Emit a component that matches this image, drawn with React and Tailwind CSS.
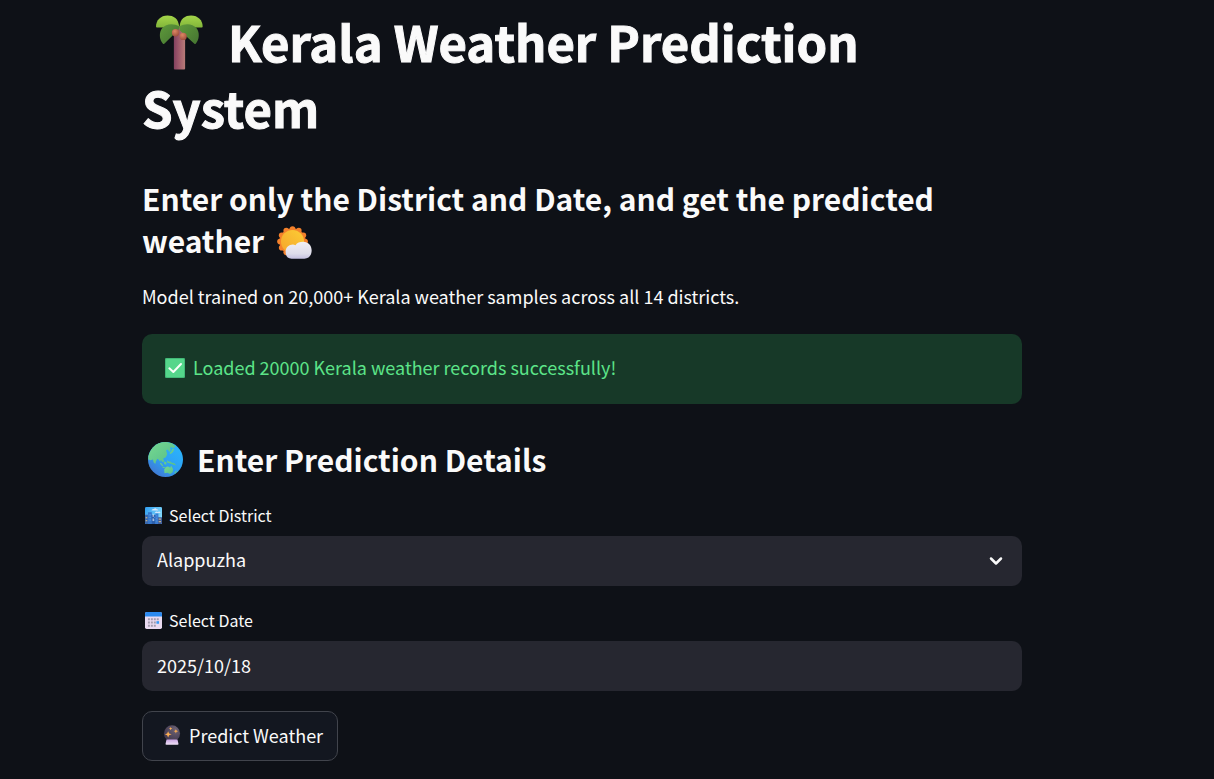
import { useState } from "react";
import { ChevronDown } from "lucide-react";

const DISTRICTS = [
  "Alappuzha", "Ernakulam", "Idukki", "Kannur", "Kasaragod", "Kollam", "Kottayam",
  "Kozhikode", "Malappuram", "Palakkad", "Pathanamthitta", "Thiruvananthapuram", "Thrissur", "Wayanad",
];

function PalmIcon({ className }) {
  return (
    <svg viewBox="48 46 142 165" className={className} aria-hidden="true">
      <defs>
        <linearGradient id="trunk" x1="0" x2="1" y1="0" y2="0">
          <stop offset="0" stopColor="#83415f" />
          <stop offset="0.45" stopColor="#a05a6c" />
          <stop offset="1" stopColor="#b77c78" />
        </linearGradient>
        <linearGradient id="leafTop" x1="0" x2="0" y1="0" y2="1">
          <stop offset="0" stopColor="#a4d54a" />
          <stop offset="1" stopColor="#82b63a" />
        </linearGradient>
        <linearGradient id="leafLow" x1="0" x2="1" y1="0" y2="1">
          <stop offset="0" stopColor="#5f9a3b" />
          <stop offset="1" stopColor="#447431" />
        </linearGradient>
        <radialGradient id="nut" cx="0.4" cy="0.3" r="0.7">
          <stop offset="0" stopColor="#dd8763" />
          <stop offset="1" stopColor="#a0503f" />
        </radialGradient>
      </defs>
      <path d="M102 80h34v127q0 3-3 3h-28q-3 0-3-3z" fill="url(#trunk)" />
      <path d="M118 81C116 56 101 47 83 47C62 47 48 62 48 80q0 3 3 3h65z" fill="url(#leafTop)" />
      <path d="M119 81C121 56 136 47 154 47C175 47 189 62 189 80q0 3-3 3h-65z" fill="url(#leafTop)" />
      <path d="M119 80C99 69 78 72 67 85C56 98 58 121 69 132q2 2 4 0L116 90z" fill="url(#leafLow)" />
      <path d="M118 80C138 69 159 72 170 85C181 98 179 121 168 132q-2 2-4 0L120 92z" fill="url(#leafLow)" />
      <circle cx="107" cy="99" r="11" fill="url(#nut)" />
      <circle cx="130" cy="110" r="11" fill="url(#nut)" />
    </svg>
  );
}

function SunCloudIcon({ className }) {
  const points = Array.from({ length: 12 }, (_, i) => (i * Math.PI) / 6);
  return (
    <svg viewBox="51 32 106 100" className={className} aria-hidden="true">
      <defs>
        <linearGradient id="sun" x1="0" x2="1" y1="1" y2="0">
          <stop offset="0" stopColor="#f5a52c" />
          <stop offset="1" stopColor="#fccd35" />
        </linearGradient>
        <linearGradient id="cloud" x1="0" x2="0" y1="0" y2="1">
          <stop offset="0" stopColor="#f1eff3" />
          <stop offset="0.7" stopColor="#deddea" />
          <stop offset="1" stopColor="#c4c0e0" />
        </linearGradient>
      </defs>
      <circle cx="98" cy="79" r="40" fill="#ef7d2c" />
      {points.map((a) => (
        <circle key={a} cx={98 + 38 * Math.sin(a)} cy={79 - 38 * Math.cos(a)} r="8.5" fill="#f4812b" />
      ))}
      <circle cx="98" cy="79" r="35" fill="url(#sun)" />
      <path d="M95 131C83 131 77 122 77 110C77 97 87 88 99 88q4 0 8 2C112 83 120 80 130 80C146 80 156 92 156 106C156 121 147 131 134 131z" fill="url(#cloud)" />
    </svg>
  );
}

function CheckIcon({ className }) {
  return (
    <svg viewBox="0 0 60 60" className={className} aria-hidden="true">
      <rect width="60" height="60" rx="4" fill="#43b978" />
      <rect x="3" y="3" width="54" height="54" rx="3" fill="#55d68b" />
      <path d="M13 31l12 11 23-24" fill="none" stroke="#f8fff9" strokeWidth="6" strokeLinecap="round" strokeLinejoin="round" />
    </svg>
  );
}

function GlobeIcon({ className }) {
  return (
    <svg viewBox="9 9 106 106" className={className} aria-hidden="true">
      <defs>
        <linearGradient id="sea" x1="0.85" x2="0.2" y1="0.1" y2="1">
          <stop offset="0" stopColor="#2bb4fc" />
          <stop offset="0.55" stopColor="#2e9ff3" />
          <stop offset="1" stopColor="#4274cf" />
        </linearGradient>
        <linearGradient id="land" x1="0" x2="1" y1="0" y2="1">
          <stop offset="0" stopColor="#78d98f" />
          <stop offset="1" stopColor="#54bd8c" />
        </linearGradient>
        <clipPath id="disc">
          <circle cx="62" cy="62" r="53" />
        </clipPath>
      </defs>
      <circle cx="62" cy="62" r="53" fill="url(#sea)" />
      <g fill="url(#land)" clipPath="url(#disc)">
        <path d="M9 52L20 26L40 10L64 8L82 13L92 22L88 27L76 25L78 34L73 39L69 32L64 34L67 46L63 55L55 59L58 67L53 70L48 63L46 69L41 62L37 60L33 68L31 76L26 70L24 62L17 64L10 62z" />
        <path d="M84 28l4 4-3 7-7 6-4-2 6-7zM66 64l6 4 7 1-2 5-9-2zM48 72l7 8-2 3-8-9zM58 68l7 2-1 8-6-2zM77 70l12 3 6 7-9-2-10-4zM54 84l10 2-1 3-10-2z" />
        <path d="M58 92l8-9 7 1 3 4 3-7 6 10-1 9-8 6-8-4-9 2zM89 101l6-6 1 5-5 6z" />
      </g>
    </svg>
  );
}

function CityIcon({ className }) {
  return (
    <svg viewBox="0 0 52 52" className={className} aria-hidden="true">
      <defs>
        <linearGradient id="sky" x1="0" x2="1" y1="0" y2="0.6">
          <stop offset="0" stopColor="#2f9df0" />
          <stop offset="1" stopColor="#86dcfc" />
        </linearGradient>
      </defs>
      <rect width="52" height="52" rx="4" fill="url(#sky)" />
      <path d="M20 11q1-6 7-5q5-5 9 1q5 0 5 4zM30 18q4-7 9-3q6-3 9 3z" fill="#d4e6fb" />
      <path d="M0 24h11v28H4q-4 0-4-4z" fill="#3a68ad" />
      <path d="M9 16h12v36H9z" fill="#3476cc" />
      <path d="M20 24h13v28H20z" fill="#2b5fae" />
      <path d="M32 20h9v32h-9z" fill="#3b7bd2" />
      <path d="M40 31h12v17q0 4-4 4h-8z" fill="#3e5c9c" />
      <path d="M2 33h5M2 42h5M42 37h7M42 45h7" stroke="#e2c681" strokeWidth="3" />
      <path d="M25 22v8M25 35v8" stroke="#e6ecf5" strokeWidth="3" />
      <path d="M13 22v24M17 22v24M29 30v16M36 25v22" stroke="#5fa5ea" strokeWidth="2" strokeDasharray="4 4" />
    </svg>
  );
}

function CalendarIcon({ className }) {
  return (
    <svg viewBox="0 0 52 52" className={className} aria-hidden="true">
      <rect width="52" height="52" rx="5" fill="#e9daf0" />
      <path d="M0 14V5q0-5 5-5h42q5 0 5 5v9z" fill="#2b89ee" />
      <g fill="#a39cae">
        <path d="M9 19h6v6H9zM18 19h6v6h-6zM27 19h6v6h-6zM36 19h6v6h-6zM9 29h6v6H9zM18 29h6v6h-6zM27 29h6v6h-6zM9 39h6v6H9zM18 39h6v6h-6zM27 39h6v6h-6z" />
      </g>
      <path d="M35 28h8v8h-8z" fill="#3999f5" />
    </svg>
  );
}

function CrystalBallIcon({ className }) {
  return (
    <svg viewBox="0 0 54 62" className={className} aria-hidden="true">
      <defs>
        <radialGradient id="ball" cx="0.7" cy="0.25" r="0.85">
          <stop offset="0" stopColor="#6b6173" />
          <stop offset="1" stopColor="#3f354c" />
        </radialGradient>
        <linearGradient id="base" x1="0" x2="0" y1="0" y2="1">
          <stop offset="0" stopColor="#c9a5e2" />
          <stop offset="1" stopColor="#f0e2f7" />
        </linearGradient>
      </defs>
      <circle cx="27" cy="26" r="25" fill="url(#ball)" />
      <path d="M10 45h34l3 13q1 3-3 3H10q-4 0-3-3z" fill="url(#base)" />
      <path d="M15 19l3 7 8 3-8 3-3 7-3-7-7-3 7-3zM39 13l2 4 5 2-5 2-2 5-2-5-5-2 5-2zM23 6l1 3 4 2-4 2-1 3-2-3-3-2 3-2z" fill="#fbae53" />
    </svg>
  );
}

export default function App() {
  const [district, setDistrict] = useState("Alappuzha");
  const [date, setDate] = useState("2025/10/18");

  return (
    <div className="min-h-screen bg-[#0e1117] pr-[50px] font-['Noto_Sans_CJK_SC','Source_Sans_3',sans-serif] text-[18px] text-[#fafafa]">
      <main className="mx-auto max-w-[880px] pt-2 pb-4">
        <h1 className="text-[49px] leading-[66px] font-bold [-webkit-text-stroke:1px_#fafafa]">
          <PalmIcon className="mr-[14px] ml-[14px] inline-block h-[55px] w-[47px] align-[-8px]" /> Kerala Weather Prediction System
        </h1>
        <h3 className="mt-[37px] text-[30px] leading-[42px] font-semibold">
          Enter only the District and Date, and get the predicted weather{" "}
          <SunCloudIcon className="ml-[6px] inline-block h-[33px] w-[35px] align-[-6px]" />
        </h3>
        <p className="mt-[19px] leading-8">Model trained on 20,000+ Kerala weather samples across all 14 districts.</p>
        <div role="status" className="mt-[22px] flex h-[70px] items-center gap-2 rounded-[10px] bg-[#173928] px-[23px] pb-[2px] text-[#5ce488]">
          <CheckIcon className="size-5 shrink-0" />
          <span className="pb-[2px]">Loaded 20000 Kerala weather records successfully!</span>
        </div>
        <h3 className="mt-[34px] flex items-center gap-[14px] pl-[6px] text-[30px] leading-[42px] font-semibold">
          <GlobeIcon className="size-[35px] shrink-0" />
          Enter Prediction Details
        </h3>
        <form onSubmit={(e) => e.preventDefault()}>
          <label htmlFor="district" className="mt-[25px] flex items-center gap-[7px] pl-[3px] text-[16px] leading-5">
            <CityIcon className="size-[17px] shrink-0" />
            Select District
          </label>
          <div className="mt-[11px] grid items-center">
            <select
              id="district"
              value={district}
              onChange={(e) => setDistrict(e.target.value)}
              className="col-start-1 row-start-1 h-[50px] w-full appearance-none rounded-[10px] bg-[#262730] px-[15px] pb-[3px]"
            >
              {DISTRICTS.map((name) => (
                <option key={name}>{name}</option>
              ))}
            </select>
            <ChevronDown className="pointer-events-none col-start-1 row-start-1 mr-4 size-5 justify-self-end" strokeWidth={3} aria-hidden="true" />
          </div>
          <label htmlFor="date" className="mt-[24px] flex items-center gap-[7px] pl-[3px] text-[16px] leading-5">
            <CalendarIcon className="size-[17px] shrink-0" />
            Select Date
          </label>
          <input
            id="date"
            type="text"
            value={date}
            onChange={(e) => setDate(e.target.value)}
            className="mt-[11px] h-[50px] w-full rounded-[10px] bg-[#262730] px-[15px] pb-[3px]"
          />
          <button type="submit" className="mt-5 flex h-[50px] items-center gap-2 rounded-[10px] border border-[#41444c] bg-[#131720] pr-[14px] pb-[2px] pl-5">
            <CrystalBallIcon className="h-5 w-[18px] shrink-0" />
            Predict Weather
          </button>
        </form>
      </main>
    </div>
  );
}
